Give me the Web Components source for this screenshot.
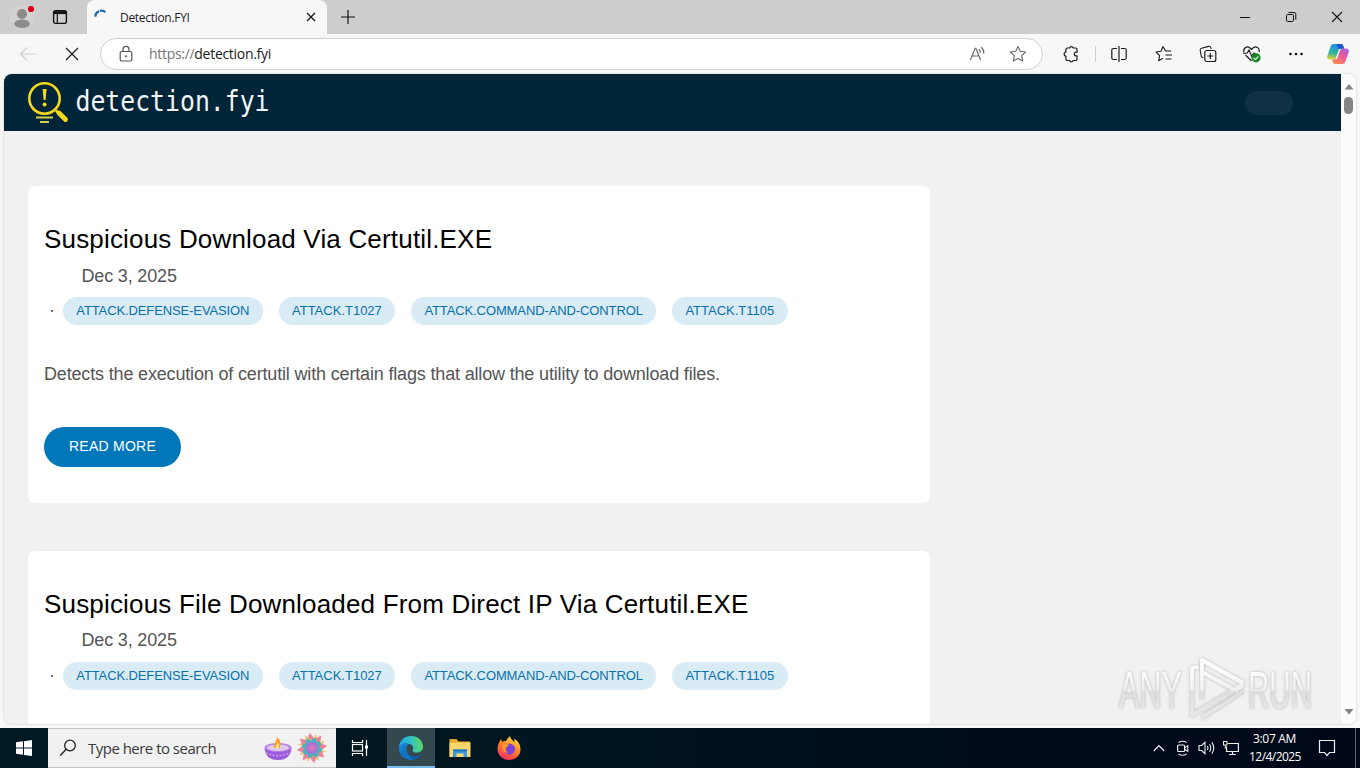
<!DOCTYPE html>
<html lang="en">
<head>
<meta charset="utf-8">
<title>Detection.FYI</title>
<style>
  html, body { margin: 0; height: 100%; overflow: hidden; }
  body {
    display: flex;
    flex-direction: column;
    background: #f7f7f7;
    font-family: "Open Sans", "Noto Sans", sans-serif;
  }
</style>
</head>
<body>
<tab-strip><span>Detection.FYI</span></tab-strip>
<tool-bar><span slot="scheme">https://</span><span slot="host">detection.fyi</span></tool-bar>
<page-view>
  <site-header></site-header>
  <rule-card>
    <span slot="title">Suspicious Download Via Certutil.EXE</span>
    <span slot="date">Dec 3, 2025</span>
    <rule-tag slot="tags" long>ATTACK.DEFENSE-EVASION</rule-tag>
    <rule-tag slot="tags">ATTACK.T1027</rule-tag>
    <rule-tag slot="tags" long>ATTACK.COMMAND-AND-CONTROL</rule-tag>
    <rule-tag slot="tags">ATTACK.T1105</rule-tag>
    <span slot="text">Detects the execution of certutil with certain flags that allow the utility to download files.</span>
    <span slot="action">READ MORE</span>
  </rule-card>
  <rule-card>
    <span slot="title">Suspicious File Downloaded From Direct IP Via Certutil.EXE</span>
    <span slot="date">Dec 3, 2025</span>
    <rule-tag slot="tags" long>ATTACK.DEFENSE-EVASION</rule-tag>
    <rule-tag slot="tags">ATTACK.T1027</rule-tag>
    <rule-tag slot="tags" long>ATTACK.COMMAND-AND-CONTROL</rule-tag>
    <rule-tag slot="tags">ATTACK.T1105</rule-tag>
  </rule-card>
</page-view>
<task-bar>
  <span slot="search">Type here to search</span>
  <span slot="time">3:07 AM</span>
  <span slot="day">12/4/2025</span>
</task-bar>
<water-mark></water-mark>

<script>
// all the icons, as [width, height, markup]
const ICONS = {
  profile: [26, 26, `<circle cx="13" cy="13" r="12" fill="#d3d2d1"/><circle cx="13" cy="10" r="5" fill="#8d8a88"/><ellipse cx="13" cy="19.7" rx="7.8" ry="4.3" fill="#8d8a88"/><circle cx="22" cy="5" r="3.1" fill="#d9001b"/>`],
  workspace: [16, 16, `<rect x="1.6" y="1.6" width="12.8" height="12.8" rx="2" fill="none" stroke="#111" stroke-width="1.4"/><path d="M1.5 3.6h13" stroke="#111" stroke-width="3"/><path d="M5.3 4v10" stroke="#111" stroke-width="1.2"/>`],
  spinner: [16, 16, `<path d="M2.2 7.6A6.2 6.2 0 0 1 12.4 3.2" fill="none" stroke="#23689f" stroke-width="2.2" stroke-dasharray="7 .8"/>`],
  tabclose: [10, 10, `<path d="M1 1l8 8M9 1L1 9" stroke="#111" stroke-width="1.2"/>`],
  plus: [14, 14, `<path d="M7 0v14M0 7h14" stroke="#111" stroke-width="1.2"/>`],
  min: [12, 12, `<path d="M1 6.5h10" stroke="#111"/>`],
  restore: [12, 12, `<rect x="1.5" y="3.5" width="7" height="7" rx="1.2" fill="none" stroke="#111"/><path d="M3.5 1.5H9a1.8 1.8 0 0 1 1.8 1.8V8.7" fill="none" stroke="#111"/>`],
  close: [12, 12, `<path d="M1 1l10 10M11 1L1 11" stroke="#111" stroke-width="1.1"/>`],
  back: [18, 16, `<path d="M17 8H1.5M8 1.5L1.5 8 8 14.5" fill="none" stroke="#cfcfcf" stroke-width="1.2"/>`],
  stop: [14, 14, `<path d="M1 1l12 12M13 1L1 13" stroke="#1b1b1b" stroke-width="1.2"/>`],
  lock: [14, 18, `<rect x="1.2" y="6.5" width="11.6" height="9.5" rx="1.6" fill="none" stroke="#555" stroke-width="1.2"/><path d="M4 6.5V4.4a3 3 0 0 1 6 0v2.1" fill="none" stroke="#555" stroke-width="1.2"/><circle cx="7" cy="11.3" r="1" fill="#555"/>`],
  aloud: [18, 16, `<path d="M1.4 14L6.1 2.3h.8L11.6 14M3 10h7" fill="none" stroke="#666" stroke-width="1.1"/><path d="M10 3.3q1.5 1.4 1.3 3.5M12 1.2q3.200 2.500 2.800 6.500" fill="none" stroke="#666" stroke-width="1.200"/>`],
  star: [18, 18, `<path d="M9 1.4l2.3 4.9 5.3.7-3.9 3.7 1 5.4L9 13.4l-4.7 2.7 1-5.4L1.4 7l5.3-.7z" fill="none" stroke="#666" stroke-width="1.1" stroke-linejoin="round"/>`],
  puzzle: [18, 18, `<path d="M5.400 3h2.200a1.900 1.900 0 0 1 3.600 0h2.300a1.500 1.500 0 0 1 1.500 1.500v2.600h-.8a1.900 1.900 0 0 0 0 3.800h.8V14a1.500 1.500 0 0 1-1.500 1.500h-2.300a1.900 1.900 0 0 1-3.600 0H5.400A1.500 1.500 0 0 1 3.900 14v-2.700a2.300 2.300 0 0 1 0-4.500V4.500A1.500 1.500 0 0 1 5.400 3z" fill="none" stroke="#1b1b1b" stroke-width="1.2"/>`],
  split: [18, 18, `<path d="M7 3.5H3.4A1.6 1.6 0 0 0 1.8 5v8a1.6 1.6 0 0 0 1.6 1.5H7M11 3.5h3.6A1.6 1.6 0 0 1 16.200 5v8a1.6 1.6 0 0 1-1.600 1.500H11M9 1v16" fill="none" stroke="#1b1b1b" stroke-width="1.2"/>`],
  favs: [18, 18, `<path d="M10.500 6L8 1.500 6 6.300 1 7l3.600 3.400-.9 5.300L8 13.300M8 1.500l2.500 4.500h5.700M10.500 10h6.500M10.500 14h6" fill="none" stroke="#1b1b1b" stroke-width="1.1" stroke-linejoin="round"/>`],
  collections: [18, 18, `<path d="M4.500 12.800L3.500 12.500a2 2 0 0 1-1.400-2.300L1.200 5.500A2 2 0 0 1 2.700 3.200L9.500 1.400a2 2 0 0 1 2.400 1.400l.3 1.200" fill="none" stroke="#1b1b1b" stroke-width="1.1"/><rect x="5.800" y="5.500" width="11" height="11" rx="2" fill="none" stroke="#1b1b1b" stroke-width="1.2"/><path d="M11.300 8v6M8.300 11h6" stroke="#1b1b1b" stroke-width="1.2"/>`],
  health: [20, 18, `<path d="M2 7.200C1 3.500 4.500.8 7.500 2.500L9.500 4.500 11.500 2.500c3-1.800 6.500.6 5.600 4.500M3.500 10L9.500 16" fill="none" stroke="#1b1b1b" stroke-width="1.200"/><path d="M1 8.200h4L7 5l2.800 6.500L11.500 8.200h2" fill="none" stroke="#1b1b1b" stroke-width="1.100"/><circle cx="14" cy="12.800" r="4.600" fill="#128a21"/><path d="M11.700 13l1.700 1.600 2.900-3.200" fill="none" stroke="#fff" stroke-width="1.100"/>`],
  dots: [14, 4, `<circle cx="1.500" cy="2" r="1.300" fill="#111"/><circle cx="7" cy="2" r="1.300" fill="#111"/><circle cx="12.500" cy="2" r="1.300" fill="#111"/>`],
  copilot: [24, 24, `<defs>
    <linearGradient id="a" x1=".3" y1="0" x2=".1" y2="1"><stop offset="0" stop-color="#1c8ee8"/><stop offset=".55" stop-color="#2bb69a"/><stop offset="1" stop-color="#f4d72c"/></linearGradient>
    <linearGradient id="b" x1=".8" y1="0" x2=".2" y2="1"><stop offset="0" stop-color="#b45be0"/><stop offset=".5" stop-color="#ec5c96"/><stop offset="1" stop-color="#fb8a4c"/></linearGradient></defs>
    <path d="M14.500 2H8C6 2 5 3.200 4.400 5L1.400 13.500c-.8 2.500.4 4 2.700 4h3c1.800 0 2.600-1 3.100-2.600L13 7l5-.5-1-3C16.600 2.400 16 2 14.500 2z" fill="url(#a)"/>
    <path d="M10.500 2H15c1.300 0 1.800.6 2.100 1.500l1 3.200h-5.600z" fill="#1b55c8"/>
    <path d="M9.500 22H16c2 0 3-1.200 3.600-3l3-8.500c.8-2.500-.4-4-2.700-4h-3c-1.800 0-2.600 1-3.100 2.600L11 17l-5 .5 1 3c.400 1.100 1 1.500 2.500 1.500z" fill="url(#b)"/>`],
  up: [10, 6, `<path d="M5 0l4.500 5.500h-9z" fill="#858585"/>`],
  down: [10, 6, `<path d="M5 5.500L9.500 0h-9z" fill="#858585"/>`],
  windows: [16, 16, `<path d="M0 2.300L7 1.300V7.600H0zM8 1.200L16 0V7.600H8zM0 8.500H7v6.300L0 13.800zM8 8.500H16V16L8 14.900z" fill="#fff"/>`],
  search: [18, 18, `<circle cx="11" cy="6.500" r="5.300" fill="none" stroke="#222" stroke-width="1.300"/><path d="M7.200 10.300L1.200 16.500" stroke="#222" stroke-width="1.400"/>`],
  diya: [30, 26, `<ellipse cx="15" cy="12.500" rx="13.500" ry="4.600" fill="#b984ea"/><ellipse cx="15" cy="12.800" rx="11" ry="3.200" fill="#e3c9e8"/><path d="M14 2c4 4 4.500 7 2.500 11h-5C9.500 9 14 7 14 2z" fill="#f6a21c"/><path d="M14.500 7c1.800 2.500 1.500 4 .8 6h-2C12 11 14.500 10 14.500 7z" fill="#fff0a0"/><path d="M1.400 13c1 9 6.500 12 13.600 12s12.600-3 13.600-12c-4 5-23 5-27.200 0z" fill="#9a5bdc"/><path d="M3 18q12 5.500 24 0" fill="none" stroke="#c99cf2" stroke-width="1.500" stroke-dasharray="2 1.500"/>`],
  rangoli: [32, 32, `<g transform="translate(16 16) rotate(-8)">${[0, 45, 90, 135, 180, 225, 270, 315].map((a) => `<g transform="rotate(${a})"><path d="M-4-8L0-15.500 4-8 0-4z" fill="#ec8298"/><path d="M0-4L5.600-13.500 6.500-5z" fill="#f6b75c"/></g>`).join('')}
    ${[22, 67, 112, 157, 202, 247, 292, 337].map((a) => `<ellipse cx="0" cy="-6.500" rx="2.700" ry="3.600" fill="#45b5bd" transform="rotate(${a})"/>`).join('')}
    <circle r="6.200" fill="#a676d6"/><circle r="3" fill="#d873c0"/></g>`],
  taskview: [18, 18, `<path d="M1.500 1v2.500h10V1M1.500 17v-2.500h10V17M15.500 1v16" fill="none" stroke="#fff" stroke-width="1.200"/><rect x="1.500" y="5.500" width="10" height="6.500" fill="none" stroke="#fff" stroke-width="1.200"/><path d="M14 6.500h3v3H14z" fill="#fff"/>`],
  edge: [26, 26, `<defs>
    <linearGradient id="a" x1="0" y1=".5" x2="1" y2=".4"><stop offset="0" stop-color="#1d9fe0"/><stop offset=".5" stop-color="#2fc3c8"/><stop offset="1" stop-color="#62d957"/></linearGradient>
    <linearGradient id="b" x1="0" y1="0" x2="1" y2="1"><stop offset="0" stop-color="#1a8fdd"/><stop offset="1" stop-color="#0b4f9c"/></linearGradient></defs>
    <path d="M1 13C1 5.500 6.500 1 13 1c7 0 12 5 12 10.500 0 4-3 6-6 6-3.500 0-5-1.200-4.300-2.600C16 13 15 9.500 11 9 6 8.500 1.500 10.500 1 13z" fill="url(#a)"/>
    <path d="M1 13c.8-4.500 6-6.200 10-4.200-3 2-3.800 6.200-1.500 9.400 2.500 3.600 8.500 4.300 13.500 1.500C21 23.300 17.500 25 13 25 6 25 .800 20 1 13z" fill="url(#b)"/>
    <path d="M10.800 9C6.500 12 8 21 15 25 10 26 4 21 4.500 16 4.800 12 7.500 9.500 10.800 9z" fill="#1375c6"/>`],
  folder: [24, 22, `<path d="M1.500 2h7l2 2.500H22V20H1.500z" fill="#e9a82c"/><path d="M1.500 5.500H22.500V20H1.500z" fill="#fbd66d"/><path d="M5 20v-7.500h14V20h-3.500v-3.500h-7V20z" fill="#3c9be0"/><path d="M5 12.500h14v2H5z" fill="#2577bd"/>`],
  firefox: [26, 26, `<defs><linearGradient id="a" x1=".8" y1="0" x2=".3" y2="1"><stop offset="0" stop-color="#fff04b"/><stop offset=".45" stop-color="#ff8a1f"/><stop offset="1" stop-color="#f32a63"/></linearGradient></defs>
    <path d="M13 25C6.300 25 1.500 20 1.500 14c0-4 1.500-7 3.700-10 .2 1.300.5 2 1.200 2.700 1-.8 2.600-.8 3.600-.4 1-2.500 1.800-3 4-5.300.3 2 1 3.200 3 4.700.6.500 1 .8 1.500 1.500.200-1.200 0-2.200-.5-3.700 4 2.500 6.500 6 6.500 11C24.500 20.500 19.500 25 13 25z" fill="url(#a)"/><circle cx="13.500" cy="14" r="5.600" fill="#7d40d8"/><path d="M6.500 8.500c3-1 4.200.8 6.500 1.200-.3 1.800-2.500 2-3 2.800-1 1.500 0 4 2 5-3.500 1-6.500-3-5.500-9z" fill="#ff9a2b"/>`],
  chevron: [12, 8, `<path d="M.8 7L6 1.600 11.200 7" fill="none" stroke="#eee" stroke-width="1.300"/>`],
  meet: [14, 16, `<rect x="1.600" y="5" width="7" height="6.500" rx="1" fill="none" stroke="#eee" stroke-width="1.200"/><path d="M9 7.500l2.800-1.800v5.600L9 9.500M2.500 2.500q4-2.600 8 0M2.500 14q4 2.600 8 0" fill="none" stroke="#eee" stroke-width="1.100"/>`],
  sound: [18, 16, `<path d="M1 5.500h2.700L7 2.300v11.400L3.700 10.500H1z" fill="none" stroke="#eee" stroke-width="1.100"/><path d="M9.300 6q1.300 2 0 4M11.500 4.200q2.700 3.800 0 7.600M13.800 2.400q4 5.600 0 11.200" fill="none" stroke="#eee" stroke-width="1.100"/>`],
  network: [18, 16, `<path d="M5.500 3.500H16.400V11.500H4.500V6.500M10.500 12v2.500M7 14.500h7" fill="none" stroke="#eee" stroke-width="1.200"/><rect x="1.500" y="1.500" width="3.500" height="3.500" fill="none" stroke="#eee"/><path d="M3.300 5v3.500" stroke="#eee"/>`],
  action: [18, 18, `<path d="M1.500 1.500h15v12h-5L9 16.500 6.500 13.500h-5z" fill="none" stroke="#eee" stroke-width="1.200"/>`],
};

function define(name, css, html) {
  customElements.define(name, class extends HTMLElement {
    constructor() {
      super();
      this.attachShadow({ mode: 'open' });
      this.shadowRoot.innerHTML = `<style>${css}</style>${html}`;
    }
  });
}

class UiIcon extends HTMLElement {
  constructor() {
    super();
    this.attachShadow({ mode: 'open' });
  }

  connectedCallback() {
    const [w, h, body] = ICONS[this.getAttribute('name')];
    this.shadowRoot.innerHTML = `
      <style>
        :host { display: flex; flex: none; align-items: center; justify-content: center; }
        svg { display: block; flex: none; }
      </style>
      <svg width="${w}" height="${h}" viewBox="0 0 ${w} ${h}">${body}</svg>`;
  }
}
customElements.define('ui-icon', UiIcon);

define('tab-strip', `
  :host { display: flex; flex: none; height: 34px; background: #cdcdcd; }
  .left { display: flex; width: 87px; }
  .left ui-icon:first-child { width: 44px; }
  .left ui-icon:last-child { width: 32px; }
  .tab {
    display: flex; align-items: center; width: 240px; box-sizing: border-box;
    padding: 0 11px 0 6px; background: #f7f7f7; border-radius: 8px 8px 0 0;
    font-size: 12px; color: #1b1b1b;
  }
  .name { flex: 1; margin-left: 11px; letter-spacing: -0.3px; }
  .new { width: 42px; }
  .buttons { display: flex; margin-left: auto; }
  .buttons ui-icon { width: 46px; }
`, `
  <div class="left"><ui-icon name="profile"></ui-icon><ui-icon name="workspace"></ui-icon></div>
  <div class="tab"><ui-icon name="spinner"></ui-icon><div class="name"><slot></slot></div><ui-icon name="tabclose"></ui-icon></div>
  <ui-icon class="new" name="plus"></ui-icon>
  <div class="buttons"><ui-icon name="min"></ui-icon><ui-icon name="restore"></ui-icon><ui-icon name="close"></ui-icon></div>
`);

define('tool-bar', `
  :host { display: flex; flex: none; align-items: center; height: 40px; }
  .nav { display: flex; width: 100px; padding-left: 6px; box-sizing: border-box; }
  .nav ui-icon { width: 44px; }
  .address {
    display: flex; align-items: center; width: 943px; height: 32px; box-sizing: border-box;
    border: 1px solid #d0d0d0; border-radius: 16px; background: #fff;
    font-size: 14px; color: #1b1b1b;
  }
  .lock { width: 48px; padding-left: 2px; box-sizing: border-box; }
  .url { flex: 1; margin-top: -1px; letter-spacing: -0.3px; }
  .scheme { color: #767676; }
  .address .end { width: 40px; }
  .address .end:last-child { margin-right: 4px; }
  .tools { display: flex; align-items: center; flex: 1; }
  .tools ui-icon { width: 44px; }
  .tools .ext { width: 48px; margin-left: 4px; }
  .line { width: 1px; height: 16px; background: #d0d0d0; }
  .tools .split { width: 46px; }
  .tools .copilot { width: 40px; }
`, `
  <div class="nav"><ui-icon name="back"></ui-icon><ui-icon name="stop"></ui-icon></div>
  <div class="address">
    <ui-icon class="lock" name="lock"></ui-icon>
    <div class="url"><span class="scheme"><slot name="scheme"></slot></span><slot name="host"></slot></div>
    <ui-icon class="end" name="aloud"></ui-icon>
    <ui-icon class="end" name="star"></ui-icon>
  </div>
  <div class="tools">
    <ui-icon class="ext" name="puzzle"></ui-icon><div class="line"></div>
    <ui-icon class="split" name="split"></ui-icon>
    <ui-icon name="favs"></ui-icon>
    <ui-icon name="collections"></ui-icon>
    <ui-icon name="health"></ui-icon>
    <ui-icon name="dots"></ui-icon>
    <ui-icon class="copilot" name="copilot"></ui-icon>
  </div>
`);

define('page-view', `
  :host {
    display: flex; height: 650px; margin: 0 4px 4px; box-sizing: border-box;
    border-radius: 8px; overflow: hidden; background: #f1f1f1;
    box-shadow: 0 0 2px #bbb; font-family: "Liberation Sans", Arial, sans-serif;
  }
  main { flex: 1; overflow: hidden; }
  .bar {
    display: flex; flex-direction: column; align-items: center; width: 15px;
    padding: 10px 0 9px; box-sizing: border-box; background: #fcfcfc;
  }
  .thumb { width: 9px; height: 17px; margin-top: 7px; border-radius: 5px; background: #858585; }
  .down { margin-top: auto; }
`, `
  <main><slot></slot></main>
  <div class="bar"><ui-icon name="up"></ui-icon><div class="thumb"></div><ui-icon class="down" name="down"></ui-icon></div>
`);

define('site-header', `
  :host {
    display: flex; align-items: center; justify-content: space-between; height: 57px;
    padding: 0 48px 0 24px; margin-bottom: 55px; background: #002538;
  }
  .toggle { width: 48px; height: 24px; border-radius: 12px; background: #0f3045; }
`, `
  <svg width="256" height="47" viewBox="0 0 256 47">
    <circle cx="16.500" cy="19.500" r="15.200" fill="none" stroke="#f4d81c" stroke-width="2.600"/>
    <path d="M28 31.500l2 2" stroke="#f4d81c" stroke-width="3"/>
    <path d="M31 34L37.500 40.500" stroke="#f4d81c" stroke-width="4.800" stroke-linecap="round"/>
    <path d="M14.600 10h4l-1 11h-2z" fill="#f4d81c"/><circle cx="16.600" cy="25.500" r="2" fill="#f4d81c"/>
    <path d="M8 38.500h17M12 43h9" stroke="#d9cf4a" stroke-width="1.800"/>
    <text x="47.500" y="32" font-family="DejaVu Sans Mono, monospace" font-size="28.500" fill="#f2f6f8" textLength="194" lengthAdjust="spacingAndGlyphs">detection.fyi</text>
  </svg>
  <div class="toggle"></div>
`);

define('rule-tag', `
  :host {
    display: block; height: 28px; padding: 0 13.3px; border-radius: 14px;
    background: #d9ebf5; color: #0a71a8; font-size: 13px; line-height: 27px; white-space: nowrap;
  }
  :host([long]) { letter-spacing: -0.11px; }
`, `<slot></slot>`);

define('rule-card', `
  :host {
    display: block; width: 902px; height: 316.7px; margin: 0 0 48px 24px; padding: 37px 16px 0;
    box-sizing: border-box; border-radius: 7px; background: #fff; color: #555;
    font-size: 18px; white-space: nowrap;
  }
  .title { height: 32px; line-height: 32px; font-size: 26px; color: #000; letter-spacing: 0.178px; }
  .date { height: 24px; margin: 8.6px 0 0 37.5px; line-height: 24px; letter-spacing: -0.165px; }
  .tags { display: flex; gap: 16px; margin-top: 9.4px; }
  .dot { width: 3px; margin-left: 5px; margin-right: -5px; line-height: 27px; }
  .text { height: 26px; margin-top: 36px; line-height: 26px; letter-spacing: -0.165px; }
  .button {
    width: 137px; height: 40px; margin-top: 40px; border-radius: 20px; background: #0077b8;
    color: #fff; font-size: 14px; line-height: 39px; text-align: center; letter-spacing: 0.25px;
  }
`, `
  <div class="title"><slot name="title"></slot></div>
  <div class="date"><slot name="date"></slot></div>
  <div class="tags"><span class="dot">·</span><slot name="tags"></slot></div>
  <div class="text"><slot name="text"></slot></div>
  <div class="button"><slot name="action"></slot></div>
`);

define('task-bar', `
  :host {
    display: flex; flex: none; height: 40px; color: #fff;
    background: linear-gradient(90deg, #001b26, #00161f 40%, #000b1c 75%, #000818);
  }
  .start { width: 48px; }
  .search {
    display: flex; align-items: center; width: 288px; box-sizing: border-box; padding: 0 8px 0 11px;
    border: 1px solid #c4c4c4; border-width: 1px 0; background: #f1f1f1; color: #3a3a3a; font-size: 15px;
  }
  .label { flex: 1; margin-left: 11px; letter-spacing: -0.52px; }
  .diya { margin-right: 3px; }
  .app { width: 49px; }
  .view { width: 48px; margin-right: 3px; }
  .on { width: 48px; background: #344850; box-shadow: inset 0 -2px #76b9ed; }
  .tray { display: flex; margin-left: auto; }
  .tray ui-icon { width: 24px; }
  .clock {
    width: 64px; padding-top: 2px; font-size: 12px; line-height: 18px; text-align: center; letter-spacing: -0.55px;
  }
  .clock .time { margin-left: -1px; letter-spacing: -0.3px; }
  .tray .action { width: 40px; }
  .end { width: 4px; margin-left: 8px; border-left: 1px solid #667; }
`, `
  <ui-icon class="start" name="windows"></ui-icon>
  <div class="search"><ui-icon name="search"></ui-icon><div class="label"><slot name="search"></slot></div><ui-icon class="diya" name="diya"></ui-icon><ui-icon name="rangoli"></ui-icon></div>
  <ui-icon class="view" name="taskview"></ui-icon>
  <ui-icon class="on" name="edge"></ui-icon>
  <ui-icon class="app" name="folder"></ui-icon>
  <ui-icon class="app" name="firefox"></ui-icon>
  <div class="tray">
    <ui-icon name="chevron"></ui-icon><ui-icon name="meet"></ui-icon><ui-icon name="sound"></ui-icon><ui-icon name="network"></ui-icon>
    <div class="clock"><div class="time"><slot name="time"></slot></div><slot name="day"></slot></div>
    <ui-icon class="action" name="action"></ui-icon>
    <div class="end"></div>
  </div>
`);

// floats over the page, bottom right
define('water-mark', `
  :host { position: absolute; left: 1106px; top: 648px; }
  svg { display: block; filter: drop-shadow(0 0 1.5px #b4b4b4); }
`, `
  <svg width="220" height="76" viewBox="0 0 220 76" font-family="Liberation Sans Narrow, Liberation Sans, sans-serif" font-size="52">
    <defs><linearGradient id="shade" gradientUnits="userSpaceOnUse" x1="0" y1="24" x2="0" y2="60">
      <stop offset="0" stop-color="#fbfbfb"/><stop offset=".5" stop-color="#f0f0f0"/><stop offset=".55" stop-color="#dedede"/><stop offset="1" stop-color="#e6e6e6"/>
    </linearGradient></defs>
    <text x="13" y="60" fill="url(#shade)" textLength="63" lengthAdjust="spacingAndGlyphs">ANY</text>
    <text x="142" y="60" fill="url(#shade)" textLength="64" lengthAdjust="spacingAndGlyphs">RUN</text>
    <g fill="none" stroke="url(#shade)" stroke-width="3.800" stroke-linejoin="round" stroke-linecap="round">
      <path d="M96 50V12L136 34M136 38L98 61"/>
      <path d="M91 19L86 20V67L134 38"/>
      <path d="M96 12L136 35M97 69L136 44"/>
      <path d="M96 24L131 43"/>
    </g>
  </svg>
`);
</script>
</body>
</html>
